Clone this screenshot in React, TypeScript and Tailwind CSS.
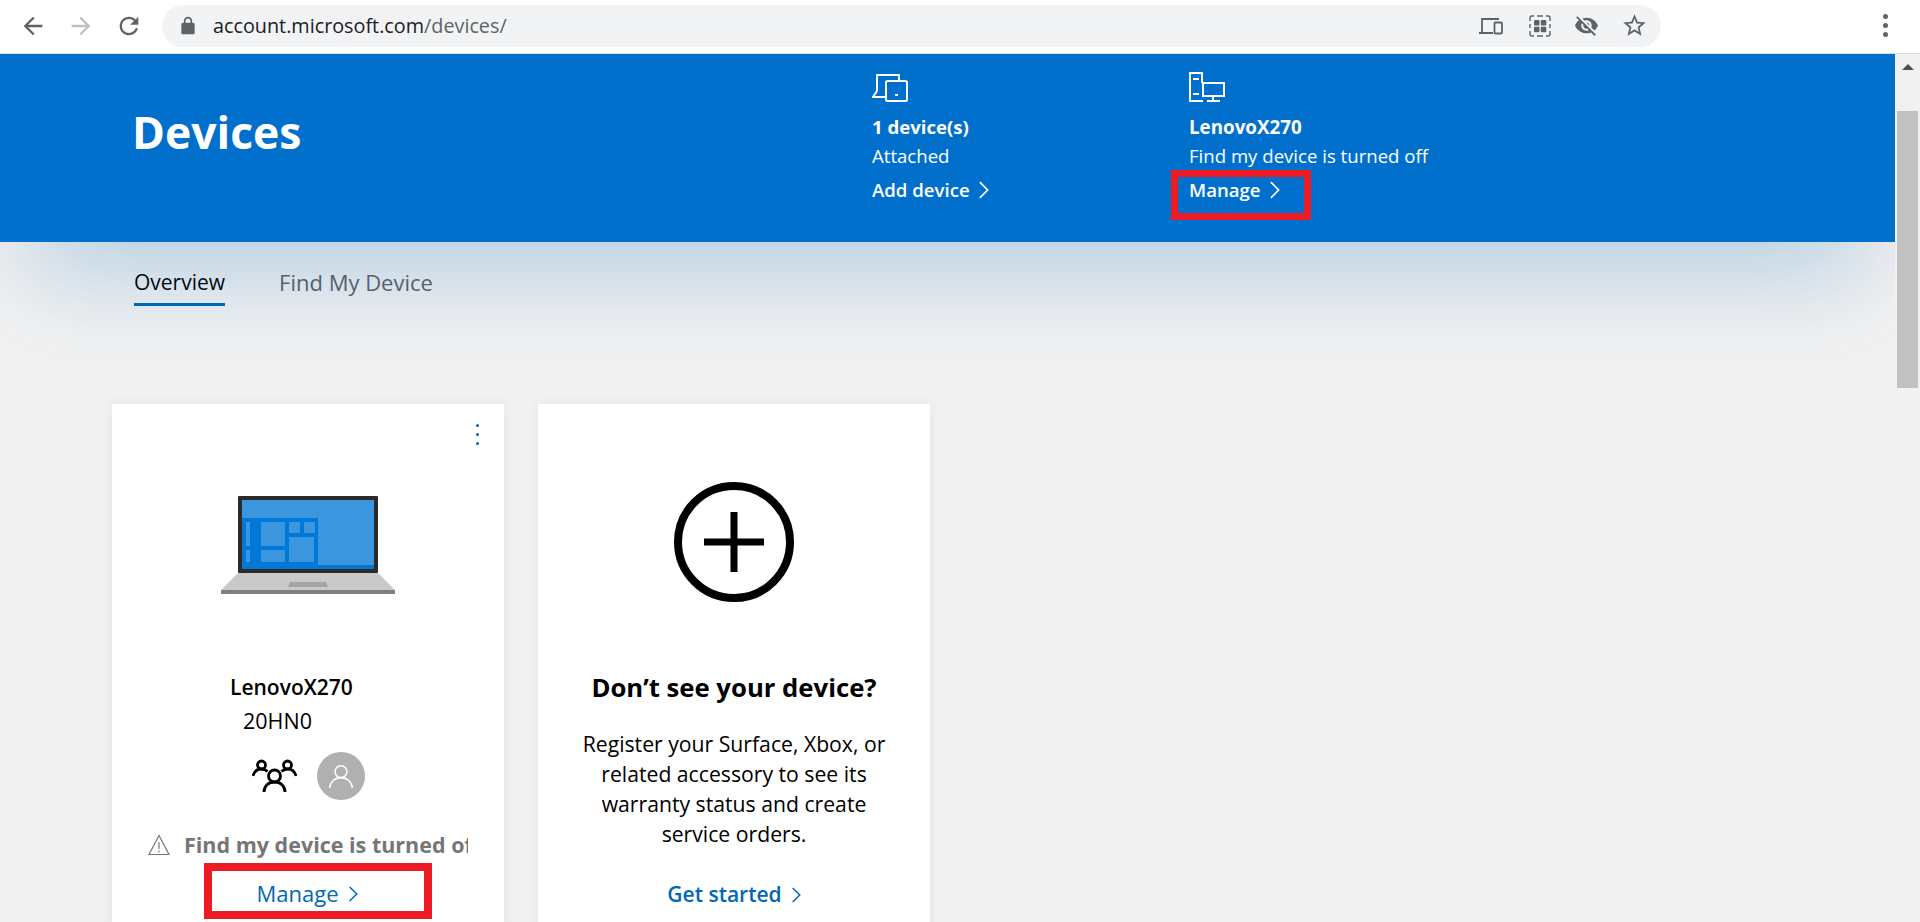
import React from "react";

const font = { fontFamily: '"Open Sans", "Noto Sans", sans-serif' };

const Chevron = ({ className }: { className: string }) => (
  <svg viewBox="0 0 12 20" className={className} fill="none" stroke="currentColor" strokeWidth="1.800">
    <path d="M2 1.500l8.500 8.500-8.500 8.500" />
  </svg>
);

const ChromeIcon = ({ d, className }: { d: string; className: string }) => (
  <svg viewBox="0 0 24 24" className={className} fill="currentColor">
    <path d={d} />
  </svg>
);

const BrowserBar = () => (
  <div className="relative z-20 flex h-[54px] shrink-0 items-center border-b border-[#dadce0] bg-white pb-[2px] text-[#5f6368]">
    <div className="flex w-[162px] shrink-0 items-center pl-[19px]">
      <ChromeIcon className="h-[28px] w-[28px]" d="M20 11H7.830l5.590-5.590L12 4l-8 8 8 8 1.410-1.410L7.830 13H20v-2z" />
      <ChromeIcon className="ml-[20px] h-[28px] w-[28px] text-[#bdc1c6]" d="M12 4l-1.410 1.410L16.170 11H4v2h12.170l-5.580 5.590L12 20l8-8z" />
      <ChromeIcon className="ml-[20px] h-[28px] w-[28px]" d="M17.650 6.350C16.200 4.900 14.210 4 12 4c-4.420 0-7.990 3.580-7.990 8s3.570 8 7.990 8c3.730 0 6.840-2.550 7.730-6h-2.080c-.82 2.330-3.040 4-5.650 4-3.310 0-6-2.690-6-6s2.690-6 6-6c1.660 0 3.140.69 4.220 1.780L13 11h7V4l-2.350 2.350z" />
    </div>
    <div className="flex h-[42px] w-[1499px] shrink-0 items-center rounded-full bg-[#f1f3f4] pl-[16px]">
      <ChromeIcon className="h-[20px] w-[20px]" d="M18 8h-1V6c0-2.760-2.240-5-5-5S7 3.240 7 6v2H6c-1.100 0-2 .9-2 2v10c0 1.100.9 2 2 2h12c1.100 0 2-.9 2-2V10c0-1.100-.9-2-2-2zM9 6c0-1.660 1.340-3 3-3s3 1.340 3 3v2H9V6z" />
      <span className="ml-[15px] text-[19.800px]" style={font}>
        <span className="text-[#202124]">account.microsoft.com</span>/devices/
      </span>
      <div className="ml-auto mr-[13px] flex items-center gap-[22px]">
        <svg viewBox="0 0 24 20" className="mr-[3px] h-[20px] w-[24px]" fill="none" stroke="currentColor" strokeWidth="1.800">
          <path d="M3 16V3h17M0 17h14" />
          <rect x="15.500" y="6.500" width="7.500" height="11" rx="1" />
        </svg>
        <svg viewBox="0 0 24 24" className="h-[24px] w-[24px]" fill="none" stroke="currentColor" strokeWidth="1.400">
          <path d="M6 2H4a2 2 0 0 0-2 2v3M18 2h2a2 2 0 0 1 2 2v3M6 22H4a2 2 0 0 1-2-2v-3M18 22h2a2 2 0 0 0 2-2v-3M9 2h6M9 22h6M2 10v4M22 10v4" />
          <g fill="currentColor" stroke="none">
            <rect x="6" y="6" width="5.500" height="5.500" rx="1" />
            <rect x="12.800" y="6" width="5.500" height="5.500" rx="1" />
            <rect x="6" y="12.800" width="5.500" height="5.500" rx="1" />
            <rect x="12.800" y="12.800" width="5.500" height="5.500" rx="1" />
          </g>
        </svg>
        <ChromeIcon className="h-[25px] w-[25px]" d="M12 7c2.760 0 5 2.240 5 5 0 .65-.13 1.260-.36 1.830l2.920 2.920c1.510-1.260 2.700-2.890 3.430-4.750-1.730-4.390-6-7.500-11-7.500-1.400 0-2.740.25-3.980.7l2.160 2.160C10.740 7.130 11.350 7 12 7zM2 4.270l2.280 2.280.46.46C3.080 8.300 1.780 10.020 1 12c1.730 4.390 6 7.500 11 7.500 1.550 0 3.030-.3 4.380-.84l.42.42L19.730 22 21 20.730 3.270 3 2 4.270zM7.530 9.800l1.550 1.550c-.05.21-.08.43-.08.65 0 1.660 1.340 3 3 3 .22 0 .44-.03.65-.08l1.550 1.550c-.67.33-1.410.53-2.200.53-2.760 0-5-2.240-5-5 0-.79.2-1.530.53-2.200zm4.310-.78l3.150 3.150.02-.16c0-1.660-1.340-3-3-3l-.17.01z" />
        <ChromeIcon className="h-[27px] w-[27px]" d="M22 9.240l-7.190-.62L12 2 9.190 8.630 2 9.240l5.460 4.730L5.820 21 12 17.270 18.180 21l-1.630-7.030L22 9.240zM12 15.400l-3.760 2.270 1-4.280-3.320-2.880 4.380-.38L12 6.100l1.710 4.040 4.380.38-3.320 2.880 1 4.280L12 15.400z" />
      </div>
    </div>
    <div className="ml-[222px] flex flex-col gap-[4px]">
      <span className="h-[5px] w-[5px] rounded-full bg-[#5f6368]" />
      <span className="h-[5px] w-[5px] rounded-full bg-[#5f6368]" />
      <span className="h-[5px] w-[5px] rounded-full bg-[#5f6368]" />
    </div>
  </div>
);

const Scrollbar = () => (
  <div className="relative z-20 flex w-[25px] shrink-0 flex-col items-center bg-[#f1f1f1]">
    <div className="mt-[10px] h-0 w-0 border-x-[6px] border-b-[6px] border-x-transparent border-b-[#505050]" />
    <div className="mt-[41px] h-[277px] w-[21px] bg-[#c1c1c1]" />
  </div>
);

const Laptop = () => (
  <svg viewBox="0 0 174 98" className="h-[98px] w-[174px]">
    <rect x="17" y="0" width="140" height="77" rx="1" fill="#2b2b2b" />
    <rect x="21" y="4" width="132" height="69" fill="#3b96de" />
    <path d="M21 22h76v47h56v4H21z" fill="#0078d7" />
    <g fill="#3b96de">
      <rect x="25" y="26" width="4" height="24" />
      <rect x="25" y="54" width="4" height="12" />
      <rect x="40" y="26" width="24" height="24" />
      <rect x="40" y="54" width="24" height="12" />
      <rect x="68" y="26" width="11" height="11" />
      <rect x="83" y="26" width="11" height="11" />
      <rect x="68" y="41" width="25" height="25" />
    </g>
    <path d="M17 77h140l17 17H0z" fill="#cacaca" />
    <path d="M69 86h36l2 5H67z" fill="#a4a4a4" />
    <rect x="0" y="94" width="174" height="4" fill="#7f7f7f" />
  </svg>
);

const GroupIcon = () => (
  <svg viewBox="0 0 45 34" className="h-[34px] w-[45px]" fill="none" stroke="#000" strokeWidth="2.800">
    <circle cx="9.500" cy="6" r="4" />
    <circle cx="35.500" cy="6" r="4" />
    <circle cx="22.500" cy="17" r="6" />
    <path d="M1 17c1-4 4-7 8.500-7 2.500 0 4.500 1 6 2.500M44 17c-1-4-4-7-8.500-7-2.500 0-4.500 1-6 2.500M12 33c0-6 4.500-10 10.500-10S33 27 33 33" />
  </svg>
);

const DeviceCard = () => (
  <div className="relative flex h-[530px] w-[392px] shrink-0 flex-col bg-white shadow-[0_0_12px_rgba(0,0,0,0.06)]">
    <div className="absolute right-[25px] top-[20px] flex flex-col gap-[6px]">
      <span className="h-[3px] w-[3px] rounded-full bg-[#0067b8]" />
      <span className="h-[3px] w-[3px] rounded-full bg-[#0067b8]" />
      <span className="h-[3px] w-[3px] rounded-full bg-[#0067b8]" />
    </div>
    <div className="ml-[109px] mt-[92px]">
      <Laptop />
    </div>
    <div className="ml-[118px] mt-[78px] text-[21px] font-semibold leading-[30px] text-black">LenovoX270</div>
    <div className="ml-[131px] mt-[4px] text-[21.500px] leading-[30px] text-black">20HN0</div>
    <div className="ml-[140px] mt-[16px] flex items-center gap-[20px]">
      <GroupIcon />
      <div className="flex h-[48px] w-[48px] items-center justify-center rounded-full bg-[#b0b0b0]">
        <svg viewBox="0 0 24 24" className="h-[26px] w-[26px]" fill="none" stroke="#fff" strokeWidth="1.400">
          <circle cx="12" cy="8" r="5.500" />
          <path d="M1.500 23c.5-5.500 5-9.500 10.500-9.500S22 17.500 22.500 23" />
        </svg>
      </div>
    </div>
    <div className="ml-[36px] mt-[32px] flex h-[26px] w-[320px] items-center">
      <svg viewBox="0 0 22 22" className="h-[22px] w-[22px] shrink-0" fill="none" stroke="#767676" strokeWidth="1.200">
        <path d="M11 1.500L21 20.500H1z" />
        <path d="M11 8v7M11 16.500v2" />
      </svg>
      <span className="ml-[14px] overflow-hidden whitespace-nowrap text-[21.500px] font-bold text-[#767676]">
        Find my device is turned off
      </span>
    </div>
    <div className="ml-[92px] mt-[5px] flex h-[56px] w-[228px] items-center justify-center gap-[9px] border-[8px] border-[#ed1c24] pr-[22px] pt-[5px] text-[22px] text-[#0067b8]">
      Manage
      <Chevron className="h-[18px] w-[10px]" />
    </div>
  </div>
);

const AddCard = () => (
  <div className="flex h-[530px] w-[392px] shrink-0 flex-col items-center bg-white shadow-[0_0_12px_rgba(0,0,0,0.06)]">
    <svg viewBox="0 0 120 120" className="mt-[78px] h-[120px] w-[120px]" fill="none" stroke="#000">
      <circle cx="60" cy="60" r="56" strokeWidth="8" />
      <path d="M60 30v60M30 60h60" strokeWidth="7" />
    </svg>
    <h2 className="mt-[66px] text-[25.700px] font-bold leading-[40px] text-black">Don’t see your device?</h2>
    <p className="mt-[21px] w-[322px] text-center text-[21.200px] leading-[30px] text-black">
      Register your Surface, Xbox, or related accessory to see its warranty status and create service orders.
    </p>
    <div className="mt-[30px] flex items-center gap-[9px] text-[21px] font-semibold text-[#0067b8]">
      Get started
      <Chevron className="h-[18px] w-[10px]" />
    </div>
  </div>
);

export default function App() {
  return (
    <div className="flex h-[922px] w-[1920px] flex-col overflow-hidden bg-[#f1f1f1]" style={font}>
      <BrowserBar />
      <div className="flex min-h-0 flex-1">
        <div className="min-w-0 flex-1">
          <header className="relative z-10 flex h-[188px] bg-[#0070cc] text-white shadow-[0_60px_100px_-30px_rgba(0,103,184,0.26)]">
            <h1 className="ml-[132px] mt-[50px] w-[740px] text-[44.500px] font-bold leading-[56px]">Devices</h1>
            <div className="mt-[20px] w-[317px]">
              <svg viewBox="0 0 36 28" className="h-[28px] w-[36px]" fill="none" stroke="#fff" strokeWidth="2">
                <path d="M5 17V1h22v6M5 17L1 23h13" />
                <rect x="14" y="7" width="21" height="20" rx="1.500" />
                <path d="M23 21h3" />
              </svg>
              <div className="mt-[13px] text-[18.600px] font-bold leading-[24px]">1 device(s)</div>
              <div className="mt-[5px] text-[18.600px] leading-[24px]">Attached</div>
              <div className="mt-[10px] flex items-center gap-[8px] text-[18.600px] font-semibold leading-[24px]">
                Add device
                <Chevron className="h-[20px] w-[11px]" />
              </div>
            </div>
            <div className="mt-[18px]">
              <svg viewBox="0 0 36 30" className="h-[30px] w-[36px]" fill="none" stroke="#fff" strokeWidth="2">
                <path d="M14 29H1V1h12v10M4 7h6M4 22h6" />
                <rect x="14" y="11" width="21" height="13" />
                <path d="M24 24v4M18 29h13" />
              </svg>
              <div className="mt-[13px] text-[18.800px] font-bold leading-[24px]">LenovoX270</div>
              <div className="mt-[5px] whitespace-nowrap text-[18.600px] leading-[24px]">Find my device is turned off</div>
              <div className="relative mt-[10px] flex items-center gap-[8px] text-[18.600px] font-semibold leading-[24px]">
                Manage
                <Chevron className="h-[20px] w-[11px]" />
                <div className="absolute -left-[18px] -top-[8px] h-[50px] w-[140px] border-[7px] border-[#ed1c24]" />
              </div>
            </div>
          </header>

          <nav className="ml-[134px] flex gap-[54px] pt-[26px] leading-[28px]">
            <div className="border-b-[3px] border-[#0067b8] pb-[7px] text-[21px] text-black">Overview</div>
            <div className="text-[22px] text-[#616161]">Find My Device</div>
          </nav>

          <main className="ml-[112px] mt-[98px] flex gap-[34px]">
            <DeviceCard />
            <AddCard />
          </main>
        </div>
        <Scrollbar />
      </div>
    </div>
  );
}
